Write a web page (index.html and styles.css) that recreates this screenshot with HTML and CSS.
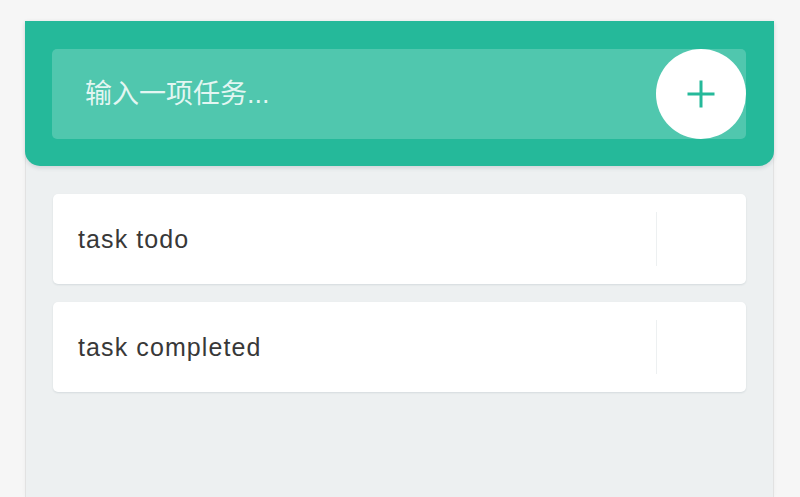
FILE: index.html
```html
<!DOCTYPE html>
<html>
<head>
<meta charset="utf-8">
<link rel="stylesheet" href="styles.css">
</head>
<body>
<div class="app">
  <header class="header">
    <div class="add-box">
      <input class="add-input" type="text" placeholder="输入一项任务...">
      <button class="add-btn" aria-label="add">
        <svg width="30" height="30" viewBox="0 0 30 30"><path d="M15 1.5V28.5M1.5 15H28.5" stroke="#25b99a" stroke-width="3" fill="none"/></svg>
      </button>
    </div>
  </header>
  <ul class="list">
    <li class="item"><span class="item-text">task todo</span><div class="item-actions"></div></li>
    <li class="item"><span class="item-text">task completed</span><div class="item-actions"></div></li>
  </ul>
</div>
</body>
</html>
```
FILE: styles.css
```css
html, body { margin: 0; padding: 0; }
body {
  background: #f6f6f6;
  font-family: "Liberation Sans", "Noto Sans CJK SC", sans-serif;
  height: 497px;
  overflow: hidden;
}
.app {
  margin: 21px 0 0 25px;
  width: 747px;
  height: 476px;
  background: #edf0f1;
  border-left: 1px solid #e2e2e2;
  border-right: 1px solid #e2e2e2;
  box-shadow: 0 0 4px rgba(0,0,0,0.04);
}
.header {
  background: #25b99a;
  border-radius: 0 0 15px 15px;
  padding: 28px 28px 27px 27px;
  box-shadow: 0 2px 4px rgba(44,62,80,0.15);
  margin: 0 -1px;
}
.add-box {
  position: relative;
  height: 90px;
}
.add-input {
  box-sizing: border-box;
  width: 100%;
  height: 90px;
  border: none;
  outline: none;
  border-radius: 5px;
  background: rgba(255,255,255,0.2);
  padding: 0 100px 0 33px;
  font-family: "Liberation Sans", "Noto Sans CJK SC", sans-serif;
  font-size: 27px;
  color: #fff;
}
.add-input::placeholder { color: rgba(255,255,255,0.85); }
.add-btn {
  position: absolute;
  right: 0;
  top: 0;
  width: 90px;
  height: 90px;
  border-radius: 50%;
  border: none;
  background: #fff;
  display: flex;
  align-items: center;
  justify-content: center;
  padding: 0;
}
.list {
  list-style: none;
  margin: 0;
  padding: 28px 27px 0 27px;
  display: flex;
  flex-direction: column;
  gap: 18px;
}
.item {
  height: 90px;
  background: #fff;
  border-radius: 5px;
  box-shadow: 0 1px 2px rgba(44,62,80,0.12);
  display: flex;
  align-items: center;
  padding-left: 25px;
}
.item-text {
  flex: 1;
  font-size: 25px;
  letter-spacing: 1.1px;
  color: #383838;
}
.item-actions {
  width: 89px;
  height: 54px;
  border-left: 1px solid #edf0f1;
}
```
